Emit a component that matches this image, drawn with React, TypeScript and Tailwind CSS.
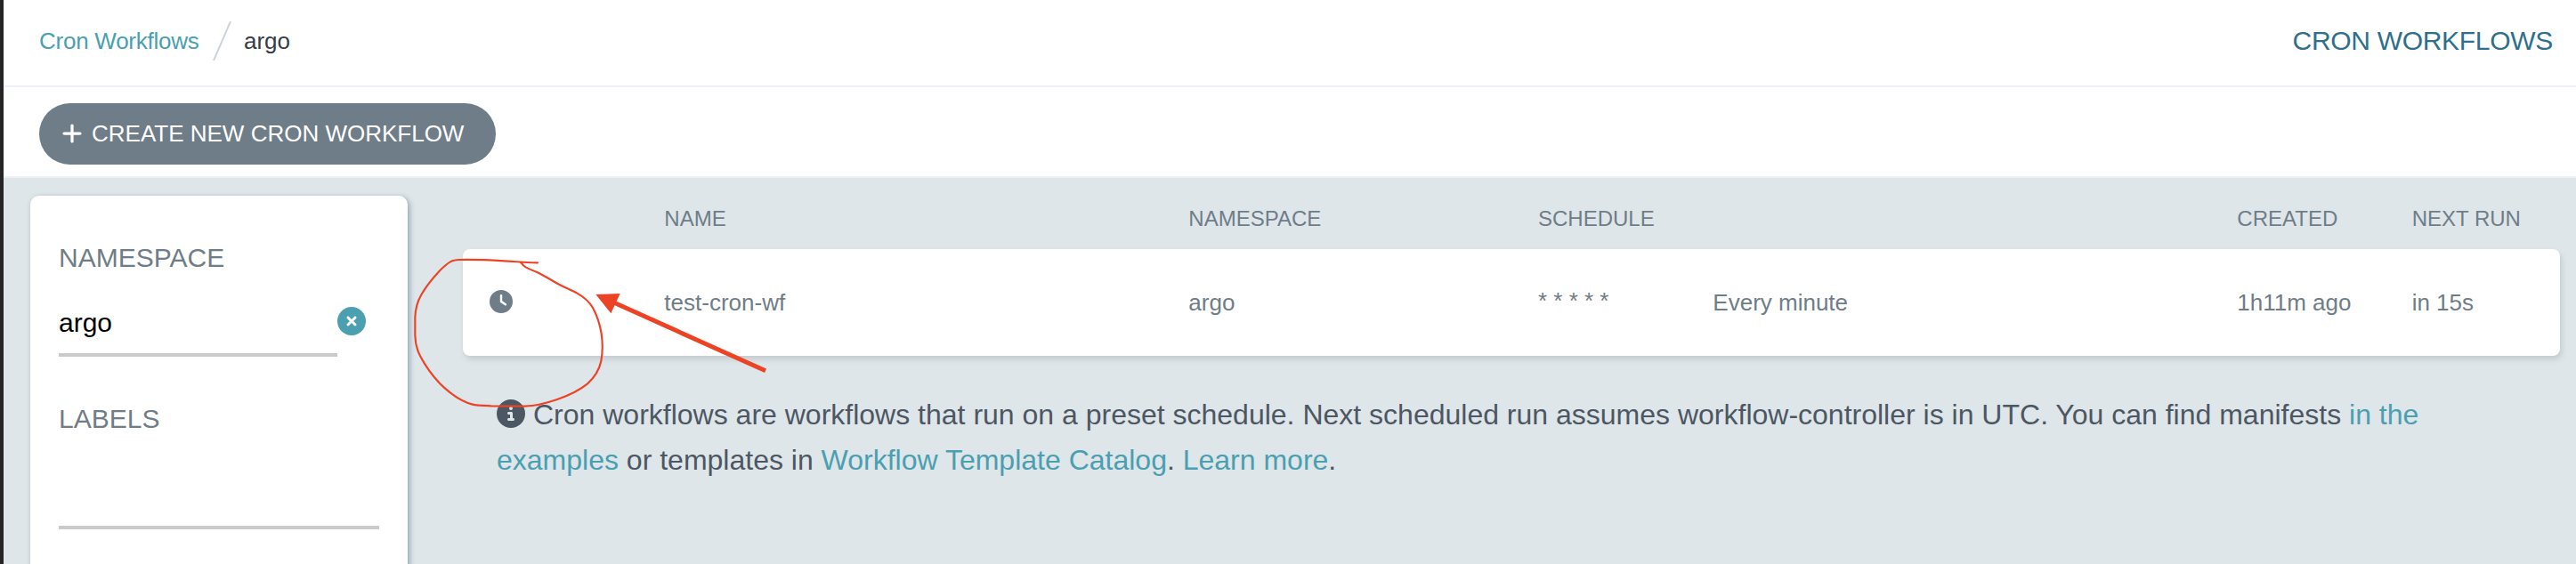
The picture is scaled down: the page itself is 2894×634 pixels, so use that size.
import { FaCircleInfo, FaCircleXmark, FaClock, FaPlus } from "react-icons/fa6";

function TopBar() {
  return (
    <header className="flex h-[98px] shrink-0 items-center justify-between border-b-2 border-[#edf1f5] bg-white pr-[26px] pb-1 pl-10">
      <nav className="flex items-center text-[26px] leading-8">
        <a className="w-[181px] tracking-[-0.25px] whitespace-nowrap text-[#4a9fb1]">Cron Workflows</a>
        <svg className="ml-[13px] h-11 w-6" viewBox="0 0 24 44" fill="none">
          <path d="M2 44 L21 0" stroke="#ccd3da" strokeWidth="2" />
        </svg>
        <span className="ml-3 text-[#363c4a]">argo</span>
      </nav>
      <h1 className="text-[30px] leading-9 tracking-[-0.3px] text-[#2f6f8b]">CRON WORKFLOWS</h1>
    </header>
  );
}

function Toolbar() {
  return (
    <div className="flex h-[102px] shrink-0 items-start border-b-2 border-[#edf1f5] bg-white pt-[18px] pl-10">
      <button className="flex h-[69px] w-[513px] items-center rounded-full bg-[#6f7d88] pb-0.5 pl-6 text-[26px] leading-8 text-white">
        <FaPlus className="mr-[9px] shrink-0" />
        <span className="whitespace-nowrap">CREATE NEW CRON WORKFLOW</span>
      </button>
    </div>
  );
}

function Filters() {
  return (
    <aside className="flex h-[440px] w-[424px] shrink-0 flex-col rounded-t-[10px] bg-white px-8 pt-[52px] text-[30px] leading-9 shadow-[2px_2px_6px_#8fa4b1]">
      <h2 className="text-[#6f7d88]">NAMESPACE</h2>
      <div className="mt-[37px] flex items-start">
        <div className="h-14 w-[313px] border-b-4 border-[#cacaca] text-black">argo</div>
        <FaCircleXmark className="size-8 text-[#4a9fb1]" />
      </div>
      <h2 className="mt-[52px] text-[#6f7d88]">LABELS</h2>
      <div className="mt-12 h-[58px] border-b-4 border-[#cacaca]" />
    </aside>
  );
}

function WorkflowTable() {
  return (
    <section className="w-[2356px] text-[#6f7d88]">
      <div className="grid h-20 grid-cols-12 items-center pt-[11px] text-2xl">
        <div className="col-span-3 col-start-2 pl-[30px]">NAME</div>
        <div className="col-span-2 pl-[30px]">NAMESPACE</div>
        <div className="col-span-4 pl-[30px]">SCHEDULE</div>
        <div className="pl-[30px]">CREATED</div>
        <div className="pl-[30px] whitespace-nowrap">NEXT RUN</div>
      </div>
      <div className="grid h-[120px] grid-cols-12 items-center rounded-lg bg-white text-[26px] shadow-[2px_4px_6px_#c3cbcf]">
        <div className="pb-0.5 pl-[30px]">
          <FaClock />
        </div>
        <div className="col-span-3 pl-[30px]">test-cron-wf</div>
        <div className="col-span-2 pl-[30px]">argo</div>
        <div className="pb-1 pl-[30px]">* * * * *</div>
        <div className="col-span-3 pl-[30px]">Every minute</div>
        <div className="pl-[30px] whitespace-nowrap">1h11m ago</div>
        <div className="pl-[30px]">in 15s</div>
      </div>
    </section>
  );
}

function Note() {
  return (
    <p className="mt-[41px] ml-[38px] text-[32px] leading-[51px] whitespace-nowrap text-[#4d5763]">
      <FaCircleInfo className="mr-[9px] inline-block size-8 align-[-4px]" />
      Cron workflows are workflows that run on a preset schedule. Next scheduled run assumes workflow-controller is in
      UTC. You can find manifests <a className="text-[#4a9fb1]">in the</a>
      <br />
      <a className="text-[#4a9fb1]">examples</a> or templates in{" "}
      <a className="text-[#4a9fb1]">Workflow Template Catalog</a>. <a className="text-[#4a9fb1]">Learn more</a>.
    </p>
  );
}

function Annotation() {
  return (
    <svg
      className="pointer-events-none absolute top-[260px] left-[440px] h-[300px] w-[460px]"
      viewBox="0 0 1380 900"
      fill="none"
    >
      <path
        d="M492 106 C455 106 425 103 380 100 C330 97 260 95 225 96 C205 97 195 101 165 130 C145 151 115 188 100 214 C85 240 80 262 79 290 L79 350 C80 390 90 413 112 448 C134 483 150 503 180 530 C210 556 240 575 270 583 C290 588 310 588 335 589 L450 590 C490 589 520 580 558 567 C600 552 630 539 660 514 C685 491 700 467 706 437 C711 410 712 380 707 345 C702 315 690 280 678 258 C665 235 650 223 625 209 C605 198 580 188 560 177 C535 163 515 150 490 138 C470 130 450 122 444 115 C440 110 438 106 433 104"
        stroke="#ed4325"
        strokeWidth="6.5"
        strokeLinecap="round"
        strokeLinejoin="round"
      />
      <path d="M1260 470 L750 241" stroke="#ed4325" strokeWidth="15" />
      <path d="M688 213 L770 210 L739 277 Z" fill="#ed4325" />
    </svg>
  );
}

export default function App() {
  return (
    <div className="relative flex h-[634px] w-[2894px] overflow-hidden bg-[#dee6e9] font-['Liberation_Sans',Arial,sans-serif]">
      <div className="w-1 shrink-0 bg-[#262424]" />
      <div className="flex min-w-0 flex-1 flex-col">
        <TopBar />
        <Toolbar />
        <main className="flex min-h-0 flex-1 items-start pl-[30px]">
          <div className="pt-5">
            <Filters />
          </div>
          <div className="ml-[62px]">
            <WorkflowTable />
            <Note />
          </div>
        </main>
      </div>
      <Annotation />
    </div>
  );
}
